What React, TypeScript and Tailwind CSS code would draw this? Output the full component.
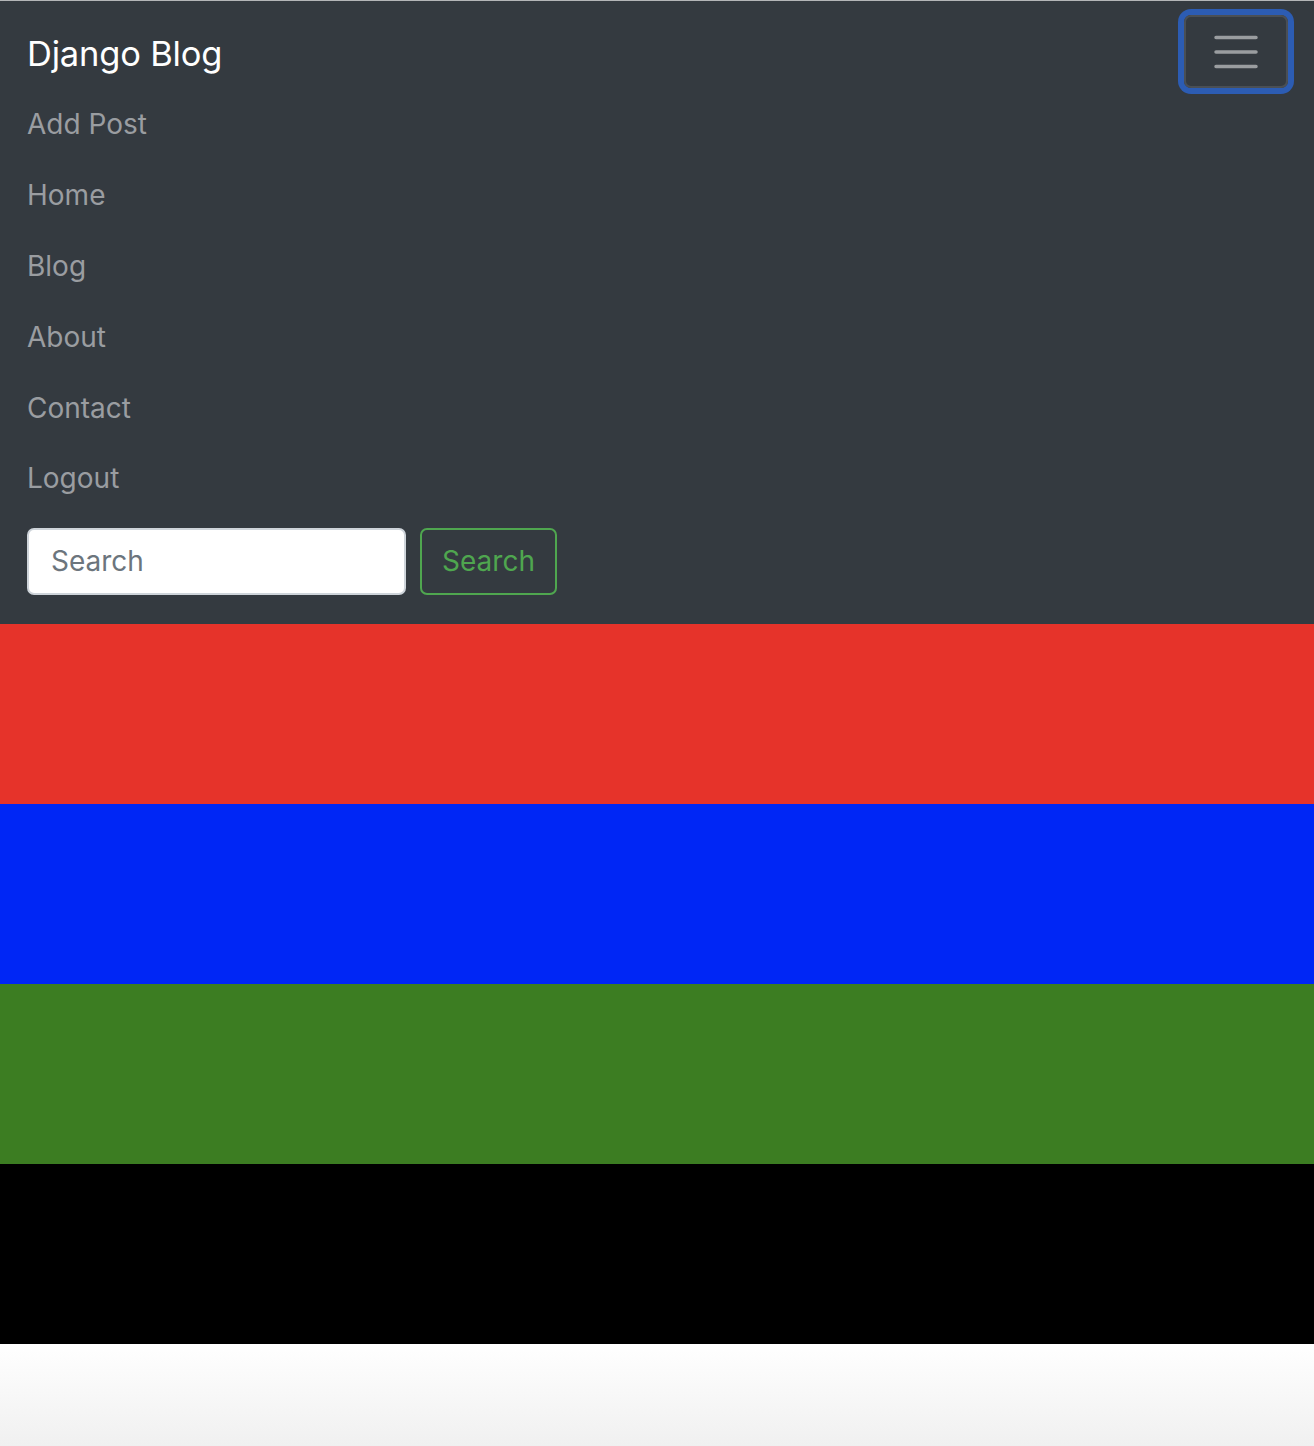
const links = ["Add Post", "Home", "Blog", "About", "Contact", "Logout"];

const stripes = ["bg-[#e6332a]", "bg-[#0026f5]", "bg-[#3c7d22]", "bg-black"];

const TogglerIcon = () => (
    <svg width="44" height="34" viewBox="0 0 44 34" fill="none">
        <path
            d="M2 2.5h40M2 17h40M2 31.5h40"
            stroke="rgba(255,255,255,0.5)"
            strokeWidth="3.5"
            strokeLinecap="round"
        />
    </svg>
);

export default function App() {
    return (
        <div className="min-h-[1446px] bg-white font-['Inter','Liberation_Sans',sans-serif]">
            <nav className="bg-[#343a40] border-t border-[#b4b6b8] px-[27px] pt-[14px] pb-[29px]">
                <div className="flex items-start justify-between h-[74px]">
                    <a className="mt-[22px] text-[34.5px] leading-none text-white tracking-[-0.2px]" href="#">
                        Django Blog
                    </a>
                    <button className="mr-[-1px] w-[104px] h-[73px] flex items-center justify-center rounded-[7px] border-2 border-[#4a4f55] ring-[6px] ring-[#2c5cb3]">
                        <TogglerIcon />
                    </button>
                </div>
                <ul className="flex flex-col">
                    {links.map((link) => (
                        <li key={link} className="h-[70.8px] flex items-center">
                            <a href="#" className="text-[28px] text-[#9a9da1]">
                                {link}
                            </a>
                        </li>
                    ))}
                </ul>
                <form className="mt-[14px] flex items-center gap-[14px]">
                    <input
                        type="search"
                        placeholder="Search"
                        className="w-[379px] h-[67px] rounded-[7px] border-2 border-[#ced4da] bg-white px-[22px] text-[28px] text-[#495057] placeholder:text-[#6c757d] outline-none"
                    />
                    <button
                        type="submit"
                        className="w-[137px] h-[67px] rounded-[7px] border-2 border-[#4fa64f] text-[28px] text-[#4fa64f]"
                    >
                        Search
                    </button>
                </form>
            </nav>
            {stripes.map((color) => (
                <div key={color} className={`h-[180px] ${color}`} />
            ))}
            <div className="h-[102px] bg-gradient-to-b from-white to-[#f0f0f0]" />
        </div>
    );
}
